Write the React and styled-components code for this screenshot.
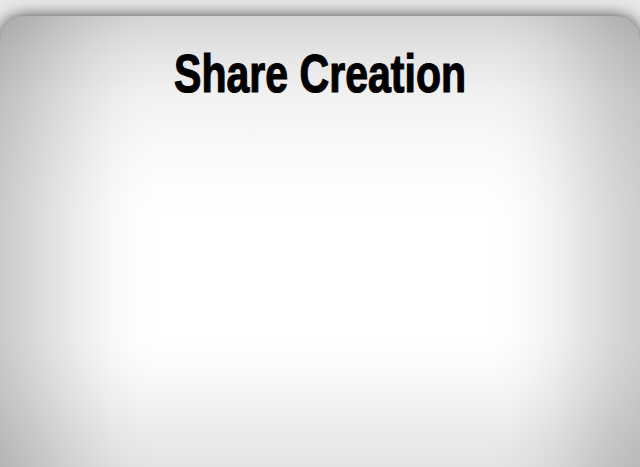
import React from "react";
import styled, { createGlobalStyle } from "styled-components";

const GlobalStyle = createGlobalStyle`
  html, body {
    margin: 0;
    padding: 0;
    height: 100%;
    overflow: hidden;
    background: #e8e8e8;
  }
`;

const Page = styled.div`
  width: 640px;
  height: 467px;
  padding-top: 16px;
  box-sizing: border-box;
  overflow: hidden;
  background: #e8e8e8;
`;

// soft vignette: two eased gradients multiplied together
const Panel = styled.div`
  height: 460px;
  border-radius: 24px 24px 0 0;
  background-color: #ffffff;
  background-image:
    linear-gradient(90deg,
      #cacaca 0px, #d7d7d7 30px, #e5e5e5 60px, #f1f1f1 90px, #f9f9f9 115px, #fdfdfd 135px, #ffffff 155px,
      #ffffff 490px, #fdfdfd 510px, #f9f9f9 530px, #f1f1f1 555px, #e4e4e4 585px, #d8d8d8 612px, #cfcfcf 640px),
    linear-gradient(180deg,
      #d4d4d4 0px, #e4e4e4 35px, #f2f2f2 80px, #f9f9f9 130px, #fdfdfd 170px, #ffffff 200px,
      #ffffff 320px, #fcfcfc 345px, #f5f5f5 380px, #ececec 415px, #e4e4e4 451px);
  background-blend-mode: multiply;
  box-shadow: 0 0 16px rgba(0, 0, 0, 0.7);
  display: flex;
  flex-direction: column;
  align-items: center;
  padding-top: 27px;
  box-sizing: border-box;
`;

const Title = styled.h1`
  margin: 0;
  font-family: "Liberation Sans", Arial, sans-serif;
  font-weight: 700;
  font-size: 54px;
  line-height: 60px;
  color: #000;
  -webkit-text-stroke: 1.2px #000;
  white-space: nowrap;
  transform: scaleX(0.76);
`;

const App = () => {
  return (
    <>
      <GlobalStyle />
      <Page>
        <Panel>
          <Title>Share Creation</Title>
        </Panel>
      </Page>
    </>
  );
};

export default App;
